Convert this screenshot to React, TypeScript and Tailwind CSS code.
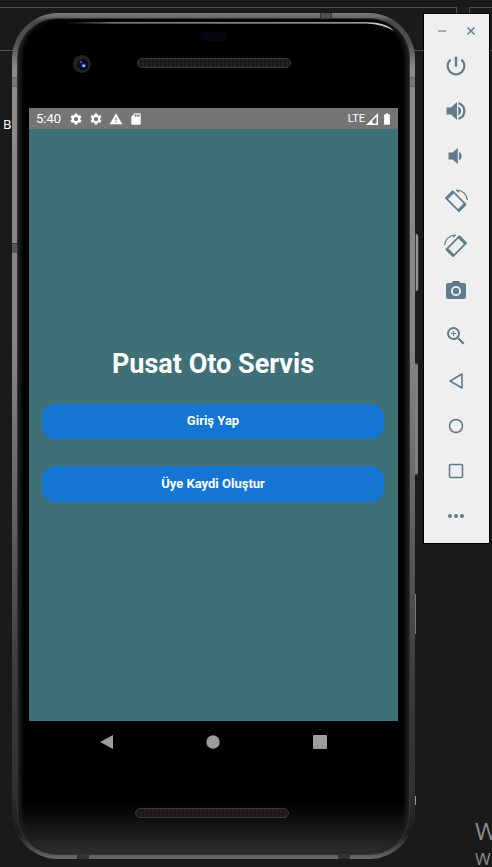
import React from "react";
import {
  MdBatteryFull,
  MdCameraAlt,
  MdMoreHoriz,
  MdSdCard,
  MdSettings,
  MdWarning,
  MdZoomIn,
} from "react-icons/md";

function RotateIcon({ flip = false }: { flip?: boolean }) {
  return (
    <svg viewBox="0 0 24 24" className={flip ? "size-6 -scale-x-100" : "size-6"} fill="none" stroke="currentColor">
      <path d="M2 9.2 8.8 2.4 21.6 15.4 14.8 22.2Z" strokeWidth="1.7" strokeLinejoin="round" />
      <path d="M3 9 8.6 3.4 M15 21.2 20.6 15.6" strokeWidth="3" strokeLinecap="round" />
      <path d="M12.6 1C18.5 1 22.8 5.2 23.4 11 M12.2 0.8 15 3.2" strokeWidth="1.2" />
    </svg>
  );
}

function Outline({ children }: { children: React.ReactNode }) {
  return (
    <svg viewBox="0 0 24 24" className="size-6" fill="none" stroke="currentColor" strokeWidth="1.6">
      {children}
    </svg>
  );
}

const tools = [
  {
    label: "Power",
    icon: (
      <svg viewBox="0 0 24 24" className="size-6" fill="none" stroke="currentColor" strokeWidth="2.2">
        <path d="M12 2.6V12.6" strokeWidth="2.4" />
        <path d="M6.6 5.6A8.4 8.4 0 1 0 17.4 5.6" />
      </svg>
    ),
  },
  {
    label: "Volume up",
    icon: (
      <svg viewBox="0 0 24 24" className="size-6" fill="currentColor">
        <path d="M2.5 8.5H7L13 3V21L7 15.5H2.5Z" />
        <path d="M14.2 7.6A4.8 4.8 0 0 1 14.2 16.4Z" />
        <path d="M14.4 4.2A8.1 8.1 0 0 1 14.4 19.8" fill="none" stroke="currentColor" strokeWidth="2.2" />
      </svg>
    ),
  },
  {
    label: "Volume down",
    icon: (
      <svg viewBox="0 0 24 24" className="size-6" fill="currentColor">
        <path d="M4.5 8.5H8.5L13.8 4V20L8.5 15.5H4.5Z" />
        <path d="M15 7.8A4.6 4.6 0 0 1 15 16.2Z" />
      </svg>
    ),
  },
  { label: "Rotate left", icon: <RotateIcon /> },
  { label: "Rotate right", icon: <RotateIcon flip /> },
  { label: "Take screenshot", icon: <MdCameraAlt className="size-6" /> },
  { label: "Zoom", icon: <MdZoomIn className="size-6" /> },
  { label: "Back", icon: <Outline><path d="M6 12 18 5V19Z" strokeLinejoin="round" /></Outline> },
  { label: "Home", icon: <Outline><circle cx="12" cy="12" r="6.5" /></Outline> },
  { label: "Overview", icon: <Outline><rect x="5.5" y="5.5" width="13" height="13" rx="1" /></Outline> },
  { label: "More", icon: <MdMoreHoriz className="size-6" /> },
];

function Toolbar() {
  return (
    <aside className="mt-[13px] w-[67px] shrink-0 self-start border border-black bg-[#efefef] pb-[5px] text-[#607d8b]">
      <div className="flex h-[29px] items-center justify-between px-3 pt-1">
        <button aria-label="Minimize" className="grid size-3 place-items-center">
          <svg viewBox="0 0 12 12" className="size-3"><path d="M2 6H10" stroke="#9fb0b9" strokeWidth="2" /></svg>
        </button>
        <button aria-label="Close" className="grid size-3 place-items-center">
          <svg viewBox="0 0 12 12" className="size-3"><path d="M2.5 2.5 9.5 9.5M9.5 2.5 2.5 9.5" stroke="currentColor" strokeWidth="1.5" /></svg>
        </button>
      </div>
      {tools.map((t) => (
        <button key={t.label} aria-label={t.label} className="flex h-[45px] w-full items-center justify-center pr-[2px]">
          {t.icon}
        </button>
      ))}
    </aside>
  );
}

function Speaker() {
  return (
    <div className="h-[10px] w-[154px] rounded-full border border-[#3c3a38] bg-[repeating-linear-gradient(90deg,#24211c_0px,#24211c_2px,#1a1816_2px,#1a1816_4px)]" />
  );
}

function StatusBar() {
  return (
    <div className="flex h-[21px] shrink-0 items-center bg-[#757575] px-[7px] text-white">
      <span className="text-[13px]">5:40</span>
      <div className="ml-2 flex gap-[6px]">
        <MdSettings className="size-[14px]" />
        <MdSettings className="size-[14px]" />
        <MdWarning className="size-[14px]" />
        <MdSdCard className="size-[14px]" />
      </div>
      <div className="ml-auto flex items-center">
        <span className="text-[11px] leading-5">LTE</span>
        <svg viewBox="0 0 12 12" className="ml-[1px] size-3">
          <path d="M0 12 12 0V12Z" fill="white" />
          <path d="M6.5 10.5V7.5L10.5 3.5V10.5Z" fill="#757575" />
        </svg>
        <MdBatteryFull className="ml-[2px] -mr-[3px] size-[14px]" />
      </div>
    </div>
  );
}

function Screen() {
  const button = "w-full rounded-[13px] bg-[#1575d3] text-[13px] font-bold";
  return (
    <main className="flex flex-1 flex-col bg-[#407077] text-white">
      <StatusBar />
      <div className="flex flex-1 flex-col items-center justify-center pr-[14px] pb-[3px] pl-[13px]">
        <h1 className="mb-[22px] text-[27px] leading-9 font-bold">Pusat Oto Servis</h1>
        <button className={button + " mb-[27px] h-[35px]"}>Giriş Yap</button>
        <button className={button + " h-[36px]"}>Üye Kaydi Oluştur</button>
      </div>
    </main>
  );
}

function NavBar() {
  return (
    <nav className="flex h-[43px] shrink-0 items-center justify-around px-[25px] pb-[1px] text-[#9c9c9c]">
      <button aria-label="Back" className="size-4">
        <svg viewBox="0 0 16 16" className="size-4"><path d="M1 8 14 1V15Z" fill="currentColor" /></svg>
      </button>
      <button aria-label="Home" className="size-4">
        <svg viewBox="0 0 16 16" className="size-4"><circle cx="8" cy="8" r="6.7" fill="currentColor" /></svg>
      </button>
      <button aria-label="Recent apps" className="size-4">
        <svg viewBox="0 0 16 16" className="size-4"><rect x="1" y="1" width="14" height="14" rx="1" fill="currentColor" /></svg>
      </button>
    </nav>
  );
}

function Phone() {
  return (
    <section className="relative mt-[13px] mb-2 ml-3 flex flex-1 flex-col rounded-[46px] bg-[linear-gradient(180deg,#7a7a7a_0px,#6a6a6a_4px,#484848_8px,#505050_30px,#8c8c8c_56px,#858585_40%,#606060_60%,#3c3c3c_78%,#303030_92%,#1c1c1c_97%,#6a6a6a_100%)] px-[5px] pt-[5px] pb-[4px]">
      <div className="absolute top-[220px] -right-1 h-[59px] w-1 rounded-r-sm border border-[#3a3a3a] bg-[#959595]" />
      <div className="absolute top-[349px] -right-[3px] h-[114px] w-[3px] rounded-r-sm border-y-2 border-[#3a3a3a] bg-[#808080]" />
      <div className="absolute top-[581px] -right-px h-10 w-px bg-[#777]" />
      <div className="absolute top-[783px] -right-px h-[9px] w-px bg-[#999]" />
      <div className="absolute top-[64px] left-0 h-[10px] w-[6px] border-y border-[#666] bg-[#777]" />
      <div className="absolute top-[230px] left-0 h-[10px] w-[6px] border-t border-[#333] bg-[#555]" />
      <div className="absolute top-[64px] right-0 h-[10px] w-[6px] border-y border-[#666] bg-[#777]" />
      <div className="absolute top-0 right-[83px] h-[5px] w-3 border-x border-[#333] bg-[#505050]" />
      <div className="absolute bottom-0 left-[65px] h-[5px] w-3 bg-[#333]" />
      <div className="absolute right-[65px] bottom-0 h-[5px] w-3 bg-[#333]" />

      <div className="relative flex flex-1 flex-col rounded-[40px] border border-[#333] bg-[linear-gradient(0deg,#303030_0px,#1c1c1c_18px,#000_52px)] px-[11px] shadow-[inset_5px_0_4px_-2px_#222,inset_-5px_0_4px_-2px_#222]">
        <svg viewBox="0 0 340 14" preserveAspectRatio="none" className="absolute top-[2px] right-[14px] left-[48px] h-[14px] w-[330px]" fill="none">
          <defs>
            <linearGradient id="gleam">
              <stop offset="0" stopColor="#8fa0a0" stopOpacity="0" />
              <stop offset="0.15" stopColor="#8fa0a0" />
              <stop offset="1" stopColor="#c8d0d0" />
            </linearGradient>
          </defs>
          <path d="M0 1.2H310Q330 1.2 338 10Q326 3.4 310 2.6H0Z" fill="url(#gleam)" />
        </svg>
        <header className="relative flex h-[89px] shrink-0 justify-center pt-[39px]">
          <div className="absolute top-[13px] h-[9px] w-[27px] rounded-full bg-[#06080d]" />
          <div className="absolute top-[36px] left-[44px] grid size-[18px] place-items-center rounded-full bg-[#24211f]">
            <div className="grid size-[11px] place-items-center rounded-full bg-[#070b26]">
              <svg viewBox="0 0 10 10" className="size-[10px]"><circle cx="4" cy="3" r="1.3" fill="#3f4e9b" /><circle cx="6.5" cy="6.5" r="2" fill="#5368c8" /><circle cx="7" cy="7" r="1" fill="#c9d6ff" /></svg>
            </div>
          </div>
          <Speaker />
        </header>
        <Screen />
        <NavBar />
        <footer className="flex h-[90px] shrink-0 justify-center pt-[44px] pr-1">
          <Speaker />
        </footer>
      </div>
    </section>
  );
}

function Desktop() {
  return (
    <div className="absolute inset-0 overflow-hidden font-['Open_Sans',sans-serif]">
      <div className="absolute top-[7px] right-[35px] -left-1 h-[44px] border border-[#505050]" />
      <div className="absolute top-[7px] -right-1 h-[44px] w-[27px] border border-[#505050]" />
      <span className="absolute top-[116px] left-[3px] font-['Noto_Sans',sans-serif] text-[13px] leading-4 text-white">B</span>
      <div className="absolute right-0 bottom-0 w-[17px] text-[#8c8c8c]">
        <p className="text-[24px] leading-10">W</p>
        <p className="text-[17px] leading-4">W</p>
      </div>
    </div>
  );
}

export default function App() {
  return (
    <div className="relative flex min-h-screen overflow-hidden bg-[#1a1a1a] font-[Roboto,sans-serif]">
      <Desktop />
      <div className="relative flex flex-1 gap-2 pr-[2px]">
        <Phone />
        <Toolbar />
      </div>
    </div>
  );
}
